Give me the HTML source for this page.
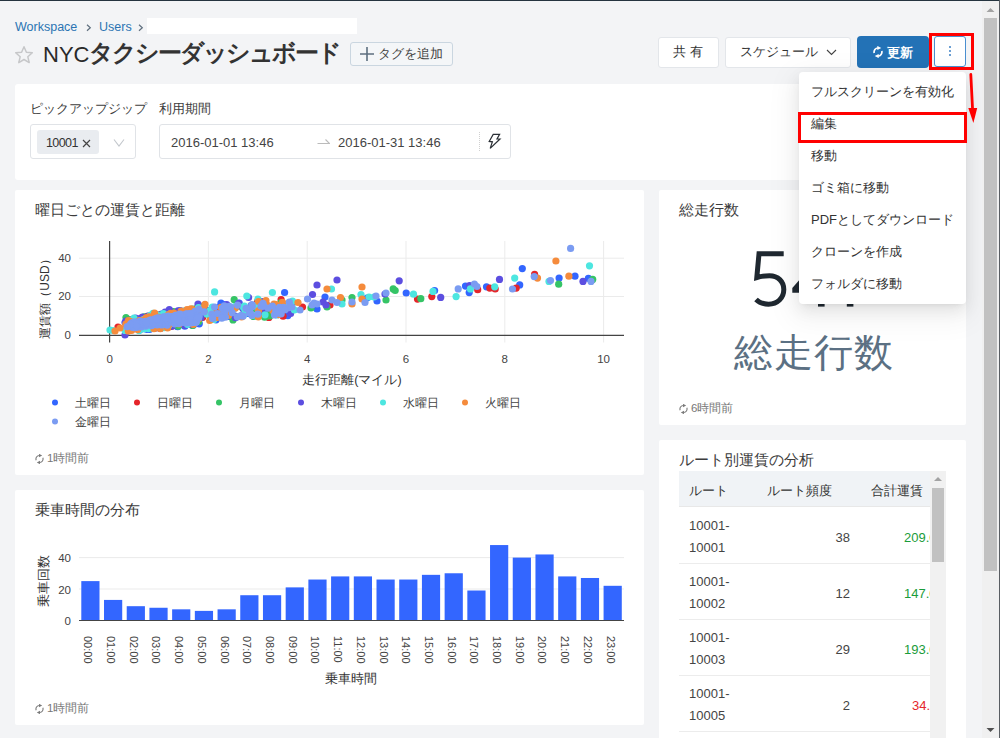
<!DOCTYPE html>
<html lang="ja">
<head>
<meta charset="utf-8">
<style>
*{box-sizing:border-box}
html,body{margin:0;padding:0}
body{width:1000px;height:738px;overflow:hidden;position:relative;background:#f3f4f6;font-family:"Liberation Sans",sans-serif;color:#333}
.abs{position:absolute}
.card{position:absolute;background:#fff;border-radius:2px}
.t{position:absolute;white-space:nowrap;line-height:1}
.btn{position:absolute;background:#fff;border:1px solid #e3e6ea;border-radius:3px}
svg text{font-family:"Liberation Sans",sans-serif}
</style>
</head>
<body>
<!-- top dark line -->
<div class="abs" style="left:0;top:0;width:1000px;height:1px;background:#25343f"></div>
<!-- breadcrumb -->
<div class="t" style="left:15px;top:21px;font-size:12.5px;color:#2b74b3">Workspace</div>
<svg class="abs" style="left:86px;top:23.5px" width="6" height="8"><path d="M1 0.8L4.3 3.8L1 6.8" fill="none" stroke="#5f6f7e" stroke-width="1.2"/></svg>
<div class="t" style="left:99px;top:21px;font-size:12.5px;color:#2b74b3">Users</div>
<svg class="abs" style="left:138px;top:23.5px" width="6" height="8"><path d="M1 0.8L4.3 3.8L1 6.8" fill="none" stroke="#5f6f7e" stroke-width="1.2"/></svg>
<div class="abs" style="left:147px;top:18px;width:210px;height:16px;background:#fff"></div>
<!-- star -->
<svg class="abs" style="left:14px;top:45px" width="20" height="20" viewBox="0 0 20 20"><path d="M10 1.8 L12.4 7.3 L18.3 7.8 L13.8 11.7 L15.2 17.6 L10 14.5 L4.8 17.6 L6.2 11.7 L1.7 7.8 L7.6 7.3 Z" fill="none" stroke="#c6c7c9" stroke-width="1.5" stroke-linejoin="round"/></svg>
<!-- title -->
<div class="t" style="left:43px;top:42px;font-size:22px;color:#2a2a2a">NYC<span style="font-size:24px;font-weight:bold;letter-spacing:-2px;position:relative;top:-1px;color:#333">タクシーダッシュボード</span></div>
<!-- tag button -->
<div class="btn" style="left:350px;top:42px;width:103px;height:24px;background:#f4f6f8;border-color:#cad6e0"></div>
<svg class="abs" style="left:360px;top:47px" width="14" height="14"><path d="M7 0V14M0 7H14" stroke="#5d6f7f" stroke-width="1.6"/></svg>
<div class="t" style="left:378px;top:47px;font-size:13px;color:#444">タグを追加</div>

<!-- header buttons -->
<div class="btn" style="left:658px;top:37px;width:61px;height:31px"></div>
<div class="t" style="left:673px;top:45px;font-size:13px;color:#333">共 有</div>
<div class="btn" style="left:725px;top:37px;width:126px;height:31px"></div>
<div class="t" style="left:740px;top:45px;font-size:13px;color:#333">スケジュール</div>
<svg class="abs" style="left:826px;top:49px" width="11" height="7"><path d="M1 1L5.5 5.5L10 1" fill="none" stroke="#444" stroke-width="1.1"/></svg>
<div class="abs" style="left:857px;top:36px;width:72px;height:32px;background:#2372b6;border-radius:4px"></div>
<svg class="abs" style="left:873px;top:46px" width="10" height="12" viewBox="0 0 10 12"><path d="M1.2 7A4 4 0 0 1 5 2M8.8 5A4 4 0 0 1 5 10" fill="none" stroke="#fff" stroke-width="1.7"/><path d="M4.3 -0.1L8.3 2L4.3 4.1Z M5.7 7.9L1.7 10L5.7 12.1Z" fill="#fff"/></svg>
<div class="t" style="left:887px;top:46px;font-size:13px;color:#fff;font-weight:bold">更新</div>
<div class="abs" style="left:934px;top:36px;width:32px;height:31px;background:#fff;border:1px solid #4a8fd0;border-radius:3px"></div>
<div class="abs" style="left:949px;top:46px;width:2px;height:2px;background:#3b7fc4;border-radius:1px"></div>
<div class="abs" style="left:949px;top:50px;width:2px;height:2px;background:#3b7fc4;border-radius:1px"></div>
<div class="abs" style="left:949px;top:54px;width:2px;height:2px;background:#3b7fc4;border-radius:1px"></div>

<!-- filter panel -->
<div class="card" style="left:15px;top:84px;width:951px;height:96px;border-radius:3px"></div>
<div class="t" style="left:30px;top:102px;font-size:13px;color:#3d3d3d">ピックアップジップ</div>
<div class="t" style="left:159px;top:102px;font-size:13px;color:#3d3d3d">利用期間</div>
<div class="abs" style="left:30px;top:124px;width:106px;height:35px;border:1px solid #e0e3e7;border-radius:3px;background:#fff"></div>
<div class="abs" style="left:37px;top:130px;width:62px;height:24px;background:#e9ecf0;border-radius:3px"></div>
<div class="t" style="left:46px;top:137px;font-size:12.5px;color:#333;letter-spacing:-0.6px">10001</div>
<svg class="abs" style="left:82px;top:139px" width="9" height="9"><path d="M1 1L8 8M8 1L1 8" stroke="#444" stroke-width="1.2"/></svg>
<svg class="abs" style="left:113px;top:138px" width="12" height="10"><path d="M1 1.5L6 8L11 1.5" fill="none" stroke="#c3c7cc" stroke-width="1.1"/></svg>
<div class="abs" style="left:159px;top:124px;width:352px;height:35px;border:1px solid #e0e3e7;border-radius:3px;background:#fff"></div>
<div class="t" style="left:171px;top:136px;font-size:13px;color:#444">2016-01-01 13:46</div>
<svg class="abs" style="left:317px;top:138px" width="13" height="7"><path d="M0.5 5.5H12.5L8.5 1.5" fill="none" stroke="#bbb" stroke-width="1.1"/></svg>
<div class="t" style="left:338px;top:136px;font-size:13px;color:#444">2016-01-31 13:46</div>
<div class="abs" style="left:479px;top:132px;width:0;height:19px;border-left:1px dotted #d0d0d0"></div>
<svg class="abs" style="left:486px;top:132px" width="16" height="18" viewBox="0 0 16 18"><path d="M7.2 2.4L13.6 2.4L11 7L14 7L4.2 16.4L6.4 9.8L3.2 9.4Z" fill="none" stroke="#2a2f35" stroke-width="1.2" stroke-linejoin="miter"/></svg>

<!-- scatter card -->
<div class="card" style="left:15px;top:190px;width:629px;height:285px"></div>
<div class="t" style="left:35px;top:202px;font-size:15px;color:#3c3c3c">曜日ごとの運賃と距離</div>
<svg class="abs" style="left:0;top:0" width="660" height="480">
 <g stroke="#ebebeb" stroke-width="1">
  <line x1="79" y1="258.2" x2="624" y2="258.2"/>
  <line x1="79" y1="296.5" x2="624" y2="296.5"/>
  <line x1="208.4" y1="241" x2="208.4" y2="342.5"/>
  <line x1="307.2" y1="241" x2="307.2" y2="342.5"/>
  <line x1="406" y1="241" x2="406" y2="342.5"/>
  <line x1="504.8" y1="241" x2="504.8" y2="342.5"/>
  <line x1="603.6" y1="241" x2="603.6" y2="342.5"/>
 </g>
 <line x1="109.6" y1="241" x2="109.6" y2="342.5" stroke="#444" stroke-width="1.2"/>
 <line x1="79" y1="335.4" x2="624" y2="335.4" stroke="#444" stroke-width="1.2"/>
 <g font-size="11.5" fill="#444" text-anchor="end">
  <text x="71" y="262">40</text><text x="71" y="300">20</text><text x="71" y="339">0</text>
 </g>
 <g font-size="11.5" fill="#444" text-anchor="middle">
  <text x="109.6" y="363">0</text><text x="208.4" y="363">2</text><text x="307.2" y="363">4</text><text x="406" y="363">6</text><text x="504.8" y="363">8</text><text x="603.6" y="363">10</text>
 </g>
 <text transform="translate(48.5,296) rotate(-90)" font-size="12" fill="#333" text-anchor="middle">運賃額（USD）</text>
 <text x="352" y="384" font-size="12.5" fill="#333" text-anchor="middle">走行距離(マイル)</text>
 <g fill="#3366ff"><circle cx="142.5" cy="320.9" r="3.6"/><circle cx="155.5" cy="322.7" r="3.6"/><circle cx="125.0" cy="322.5" r="3.6"/><circle cx="183.4" cy="314.3" r="3.6"/><circle cx="149.7" cy="319.8" r="3.6"/><circle cx="170.3" cy="318.7" r="3.6"/><circle cx="177.6" cy="326.5" r="3.6"/><circle cx="169.9" cy="313.3" r="3.6"/><circle cx="179.8" cy="315.7" r="3.6"/><circle cx="151.4" cy="325.1" r="3.6"/><circle cx="190.3" cy="315.8" r="3.6"/><circle cx="174.7" cy="317.4" r="3.6"/><circle cx="126.7" cy="331.3" r="3.6"/><circle cx="162.2" cy="326.1" r="3.6"/><circle cx="158.9" cy="315.2" r="3.6"/><circle cx="135.2" cy="324.1" r="3.6"/><circle cx="184.8" cy="326.2" r="3.6"/><circle cx="173.0" cy="317.5" r="3.6"/><circle cx="149.5" cy="329.5" r="3.6"/><circle cx="144.6" cy="326.3" r="3.6"/><circle cx="161.6" cy="314.0" r="3.6"/><circle cx="155.8" cy="316.3" r="3.6"/><circle cx="170.4" cy="312.5" r="3.6"/><circle cx="177.7" cy="326.7" r="3.6"/><circle cx="155.2" cy="324.6" r="3.6"/><circle cx="193.4" cy="325.1" r="3.6"/><circle cx="185.2" cy="317.6" r="3.6"/><circle cx="199.3" cy="323.8" r="3.6"/><circle cx="157.3" cy="323.2" r="3.6"/><circle cx="137.4" cy="324.5" r="3.6"/><circle cx="155.4" cy="325.1" r="3.6"/><circle cx="184.8" cy="314.6" r="3.6"/><circle cx="169.8" cy="324.1" r="3.6"/><circle cx="156.3" cy="316.2" r="3.6"/><circle cx="180.1" cy="314.3" r="3.6"/><circle cx="193.7" cy="323.5" r="3.6"/><circle cx="156.9" cy="323.5" r="3.6"/><circle cx="141.7" cy="320.8" r="3.6"/><circle cx="180.9" cy="324.1" r="3.6"/><circle cx="147.4" cy="326.8" r="3.6"/><circle cx="191.1" cy="313.3" r="3.6"/><circle cx="166.0" cy="324.9" r="3.6"/><circle cx="150.1" cy="319.5" r="3.6"/><circle cx="146.9" cy="329.5" r="3.6"/><circle cx="193.4" cy="321.3" r="3.6"/><circle cx="168.8" cy="326.5" r="3.6"/><circle cx="184.6" cy="322.6" r="3.6"/><circle cx="174.3" cy="315.2" r="3.6"/><circle cx="179.9" cy="310.7" r="3.6"/><circle cx="215.4" cy="316.8" r="3.6"/><circle cx="216.1" cy="319.8" r="3.6"/><circle cx="198.3" cy="321.1" r="3.6"/><circle cx="229.1" cy="311.2" r="3.6"/><circle cx="223.3" cy="306.4" r="3.6"/><circle cx="265.8" cy="312.5" r="3.6"/><circle cx="212.0" cy="311.8" r="3.6"/><circle cx="239.2" cy="303.0" r="3.6"/><circle cx="201.8" cy="311.5" r="3.6"/><circle cx="229.5" cy="316.4" r="3.6"/><circle cx="264.0" cy="304.3" r="3.6"/><circle cx="287.9" cy="315.6" r="3.6"/><circle cx="223.6" cy="304.5" r="3.6"/><circle cx="247.7" cy="313.4" r="3.6"/><circle cx="220.4" cy="306.2" r="3.6"/><circle cx="284.6" cy="292.5" r="3.6"/><circle cx="221.0" cy="303.0" r="3.6"/><circle cx="317.0" cy="309.0" r="3.6"/><circle cx="325.0" cy="297.0" r="3.6"/><circle cx="367.0" cy="298.0" r="3.6"/><circle cx="377.0" cy="301.0" r="3.6"/><circle cx="522.3" cy="268.6" r="3.6"/><circle cx="559.1" cy="278.1" r="3.6"/><circle cx="575.0" cy="276.2" r="3.6"/><circle cx="588.4" cy="278.3" r="3.6"/><circle cx="519.7" cy="284.9" r="3.6"/><circle cx="486.5" cy="286.8" r="3.6"/><circle cx="406.2" cy="293.0" r="3.6"/><circle cx="434.6" cy="290.5" r="3.6"/><circle cx="465.5" cy="286.1" r="3.6"/><circle cx="469.2" cy="292.6" r="3.6"/></g><g fill="#e5252a"><circle cx="158.9" cy="326.7" r="3.6"/><circle cx="129.7" cy="319.6" r="3.6"/><circle cx="178.1" cy="315.9" r="3.6"/><circle cx="156.5" cy="322.7" r="3.6"/><circle cx="181.9" cy="312.0" r="3.6"/><circle cx="133.7" cy="323.8" r="3.6"/><circle cx="147.8" cy="328.3" r="3.6"/><circle cx="173.1" cy="313.2" r="3.6"/><circle cx="138.7" cy="319.6" r="3.6"/><circle cx="186.3" cy="313.5" r="3.6"/><circle cx="130.6" cy="321.7" r="3.6"/><circle cx="158.4" cy="315.0" r="3.6"/><circle cx="146.1" cy="323.6" r="3.6"/><circle cx="194.8" cy="316.6" r="3.6"/><circle cx="149.5" cy="325.0" r="3.6"/><circle cx="172.6" cy="324.5" r="3.6"/><circle cx="194.1" cy="311.6" r="3.6"/><circle cx="182.7" cy="314.4" r="3.6"/><circle cx="165.1" cy="313.5" r="3.6"/><circle cx="196.0" cy="316.5" r="3.6"/><circle cx="154.5" cy="326.3" r="3.6"/><circle cx="154.1" cy="321.4" r="3.6"/><circle cx="194.3" cy="310.1" r="3.6"/><circle cx="150.1" cy="326.7" r="3.6"/><circle cx="164.3" cy="321.8" r="3.6"/><circle cx="134.1" cy="319.6" r="3.6"/><circle cx="145.2" cy="322.9" r="3.6"/><circle cx="171.3" cy="326.5" r="3.6"/><circle cx="146.3" cy="326.2" r="3.6"/><circle cx="156.0" cy="322.3" r="3.6"/><circle cx="170.9" cy="325.5" r="3.6"/><circle cx="191.8" cy="311.7" r="3.6"/><circle cx="191.6" cy="310.7" r="3.6"/><circle cx="165.7" cy="323.7" r="3.6"/><circle cx="162.7" cy="323.7" r="3.6"/><circle cx="192.9" cy="316.6" r="3.6"/><circle cx="138.8" cy="320.3" r="3.6"/><circle cx="172.6" cy="312.3" r="3.6"/><circle cx="177.1" cy="323.4" r="3.6"/><circle cx="141.2" cy="322.6" r="3.6"/><circle cx="155.1" cy="315.5" r="3.6"/><circle cx="147.2" cy="316.3" r="3.6"/><circle cx="195.8" cy="308.9" r="3.6"/><circle cx="157.2" cy="321.4" r="3.6"/><circle cx="193.2" cy="310.6" r="3.6"/><circle cx="169.4" cy="322.1" r="3.6"/><circle cx="193.5" cy="310.9" r="3.6"/><circle cx="156.8" cy="318.2" r="3.6"/><circle cx="182.3" cy="315.4" r="3.6"/><circle cx="154.7" cy="320.4" r="3.6"/><circle cx="141.6" cy="317.9" r="3.6"/><circle cx="193.7" cy="312.3" r="3.6"/><circle cx="199.3" cy="313.8" r="3.6"/><circle cx="173.6" cy="323.9" r="3.6"/><circle cx="138.9" cy="321.3" r="3.6"/><circle cx="182.9" cy="311.4" r="3.6"/><circle cx="155.0" cy="317.9" r="3.6"/><circle cx="255.6" cy="314.5" r="3.6"/><circle cx="281.1" cy="299.7" r="3.6"/><circle cx="217.8" cy="310.1" r="3.6"/><circle cx="272.3" cy="312.4" r="3.6"/><circle cx="252.1" cy="307.2" r="3.6"/><circle cx="262.5" cy="304.5" r="3.6"/><circle cx="257.4" cy="301.7" r="3.6"/><circle cx="221.2" cy="311.9" r="3.6"/><circle cx="283.1" cy="316.2" r="3.6"/><circle cx="202.7" cy="317.3" r="3.6"/><circle cx="268.9" cy="317.4" r="3.6"/><circle cx="118.0" cy="327.0" r="3.6"/><circle cx="302.5" cy="307.0" r="3.6"/><circle cx="330.0" cy="305.0" r="3.6"/><circle cx="534.6" cy="274.4" r="3.6"/><circle cx="516.2" cy="288.1" r="3.6"/><circle cx="489.8" cy="288.1" r="3.6"/><circle cx="495.2" cy="289.0" r="3.6"/><circle cx="417.5" cy="299.1" r="3.6"/><circle cx="431.8" cy="296.6" r="3.6"/><circle cx="477.7" cy="289.7" r="3.6"/></g><g fill="#35c466"><circle cx="170.0" cy="324.3" r="3.6"/><circle cx="174.7" cy="318.7" r="3.6"/><circle cx="182.5" cy="316.6" r="3.6"/><circle cx="143.2" cy="324.9" r="3.6"/><circle cx="133.2" cy="325.1" r="3.6"/><circle cx="142.9" cy="326.4" r="3.6"/><circle cx="127.6" cy="319.8" r="3.6"/><circle cx="177.8" cy="323.7" r="3.6"/><circle cx="144.2" cy="316.8" r="3.6"/><circle cx="178.3" cy="326.2" r="3.6"/><circle cx="178.1" cy="320.0" r="3.6"/><circle cx="192.5" cy="325.4" r="3.6"/><circle cx="165.3" cy="325.1" r="3.6"/><circle cx="150.7" cy="321.5" r="3.6"/><circle cx="193.6" cy="319.1" r="3.6"/><circle cx="192.7" cy="313.7" r="3.6"/><circle cx="132.2" cy="325.9" r="3.6"/><circle cx="177.9" cy="321.1" r="3.6"/><circle cx="159.7" cy="325.3" r="3.6"/><circle cx="154.3" cy="321.0" r="3.6"/><circle cx="198.7" cy="321.6" r="3.6"/><circle cx="192.7" cy="309.0" r="3.6"/><circle cx="195.9" cy="319.5" r="3.6"/><circle cx="173.6" cy="311.7" r="3.6"/><circle cx="181.6" cy="316.6" r="3.6"/><circle cx="151.8" cy="317.5" r="3.6"/><circle cx="186.1" cy="311.6" r="3.6"/><circle cx="171.9" cy="317.5" r="3.6"/><circle cx="172.1" cy="311.9" r="3.6"/><circle cx="152.7" cy="316.5" r="3.6"/><circle cx="141.4" cy="325.9" r="3.6"/><circle cx="193.5" cy="315.7" r="3.6"/><circle cx="192.1" cy="312.6" r="3.6"/><circle cx="154.6" cy="319.7" r="3.6"/><circle cx="160.4" cy="324.7" r="3.6"/><circle cx="148.4" cy="318.6" r="3.6"/><circle cx="248.1" cy="310.2" r="3.6"/><circle cx="253.5" cy="316.4" r="3.6"/><circle cx="272.2" cy="308.4" r="3.6"/><circle cx="210.5" cy="317.6" r="3.6"/><circle cx="198.3" cy="311.9" r="3.6"/><circle cx="269.5" cy="309.8" r="3.6"/><circle cx="238.6" cy="306.2" r="3.6"/><circle cx="224.1" cy="309.2" r="3.6"/><circle cx="268.6" cy="313.6" r="3.6"/><circle cx="202.0" cy="306.7" r="3.6"/><circle cx="249.9" cy="309.1" r="3.6"/><circle cx="270.0" cy="315.8" r="3.6"/><circle cx="291.7" cy="305.1" r="3.6"/><circle cx="233.0" cy="319.9" r="3.6"/><circle cx="264.6" cy="317.2" r="3.6"/><circle cx="266.5" cy="316.2" r="3.6"/><circle cx="281.0" cy="302.7" r="3.6"/><circle cx="253.0" cy="308.4" r="3.6"/><circle cx="258.4" cy="315.3" r="3.6"/><circle cx="243.8" cy="313.9" r="3.6"/><circle cx="259.3" cy="307.5" r="3.6"/><circle cx="126.0" cy="317.5" r="3.6"/><circle cx="234.2" cy="299.7" r="3.6"/><circle cx="311.0" cy="308.0" r="3.6"/><circle cx="327.0" cy="307.0" r="3.6"/><circle cx="342.0" cy="300.0" r="3.6"/><circle cx="352.0" cy="297.5" r="3.6"/><circle cx="386.0" cy="300.0" r="3.6"/><circle cx="558.7" cy="284.2" r="3.6"/><circle cx="592.7" cy="279.4" r="3.6"/><circle cx="393.2" cy="288.9" r="3.6"/><circle cx="395.2" cy="290.5" r="3.6"/><circle cx="420.8" cy="298.7" r="3.6"/></g><g fill="#5c4ee0"><circle cx="158.9" cy="322.3" r="3.6"/><circle cx="171.0" cy="314.9" r="3.6"/><circle cx="172.6" cy="321.1" r="3.6"/><circle cx="160.2" cy="328.4" r="3.6"/><circle cx="148.3" cy="316.1" r="3.6"/><circle cx="178.0" cy="310.9" r="3.6"/><circle cx="182.7" cy="316.9" r="3.6"/><circle cx="161.3" cy="322.3" r="3.6"/><circle cx="139.7" cy="330.0" r="3.6"/><circle cx="156.6" cy="327.7" r="3.6"/><circle cx="198.3" cy="309.5" r="3.6"/><circle cx="181.2" cy="311.3" r="3.6"/><circle cx="131.9" cy="320.5" r="3.6"/><circle cx="133.7" cy="321.8" r="3.6"/><circle cx="177.1" cy="318.3" r="3.6"/><circle cx="127.2" cy="326.9" r="3.6"/><circle cx="162.3" cy="322.7" r="3.6"/><circle cx="186.6" cy="311.1" r="3.6"/><circle cx="145.6" cy="319.3" r="3.6"/><circle cx="176.3" cy="314.2" r="3.6"/><circle cx="144.2" cy="326.3" r="3.6"/><circle cx="171.9" cy="326.2" r="3.6"/><circle cx="184.8" cy="325.5" r="3.6"/><circle cx="151.1" cy="316.6" r="3.6"/><circle cx="163.9" cy="323.5" r="3.6"/><circle cx="129.9" cy="325.8" r="3.6"/><circle cx="194.1" cy="322.1" r="3.6"/><circle cx="150.5" cy="328.2" r="3.6"/><circle cx="164.4" cy="314.8" r="3.6"/><circle cx="134.9" cy="319.4" r="3.6"/><circle cx="132.3" cy="329.2" r="3.6"/><circle cx="190.7" cy="324.3" r="3.6"/><circle cx="183.3" cy="323.5" r="3.6"/><circle cx="165.0" cy="319.0" r="3.6"/><circle cx="173.2" cy="322.8" r="3.6"/><circle cx="133.1" cy="321.6" r="3.6"/><circle cx="154.0" cy="328.4" r="3.6"/><circle cx="160.4" cy="316.3" r="3.6"/><circle cx="165.6" cy="322.0" r="3.6"/><circle cx="168.9" cy="322.2" r="3.6"/><circle cx="158.2" cy="324.0" r="3.6"/><circle cx="172.3" cy="317.6" r="3.6"/><circle cx="151.6" cy="320.1" r="3.6"/><circle cx="187.8" cy="322.2" r="3.6"/><circle cx="167.6" cy="325.2" r="3.6"/><circle cx="180.4" cy="316.4" r="3.6"/><circle cx="138.3" cy="318.8" r="3.6"/><circle cx="156.7" cy="324.9" r="3.6"/><circle cx="182.4" cy="318.7" r="3.6"/><circle cx="151.2" cy="315.5" r="3.6"/><circle cx="125.8" cy="321.2" r="3.6"/><circle cx="160.4" cy="321.4" r="3.6"/><circle cx="166.1" cy="325.4" r="3.6"/><circle cx="189.0" cy="317.2" r="3.6"/><circle cx="142.5" cy="317.0" r="3.6"/><circle cx="165.1" cy="312.2" r="3.6"/><circle cx="169.3" cy="309.6" r="3.6"/><circle cx="135.5" cy="318.0" r="3.6"/><circle cx="151.3" cy="316.0" r="3.6"/><circle cx="225.7" cy="316.4" r="3.6"/><circle cx="251.1" cy="305.5" r="3.6"/><circle cx="286.0" cy="308.7" r="3.6"/><circle cx="263.9" cy="312.9" r="3.6"/><circle cx="226.7" cy="304.6" r="3.6"/><circle cx="238.6" cy="303.3" r="3.6"/><circle cx="233.3" cy="308.2" r="3.6"/><circle cx="242.9" cy="308.6" r="3.6"/><circle cx="235.0" cy="316.2" r="3.6"/><circle cx="247.7" cy="311.4" r="3.6"/><circle cx="235.5" cy="317.7" r="3.6"/><circle cx="208.0" cy="310.5" r="3.6"/><circle cx="262.1" cy="301.5" r="3.6"/><circle cx="290.6" cy="313.5" r="3.6"/><circle cx="201.0" cy="317.4" r="3.6"/><circle cx="125.0" cy="335.0" r="3.6"/><circle cx="248.6" cy="297.5" r="3.6"/><circle cx="198.0" cy="304.0" r="3.6"/><circle cx="317.0" cy="285.0" r="3.6"/><circle cx="337.0" cy="280.0" r="3.6"/><circle cx="312.5" cy="294.5" r="3.6"/><circle cx="323.0" cy="302.0" r="3.6"/><circle cx="326.0" cy="305.0" r="3.6"/><circle cx="385.0" cy="294.0" r="3.6"/><circle cx="499.5" cy="279.4" r="3.6"/><circle cx="583.0" cy="281.4" r="3.6"/><circle cx="399.2" cy="280.8" r="3.6"/><circle cx="440.7" cy="297.4" r="3.6"/><circle cx="469.6" cy="285.7" r="3.6"/></g><g fill="#4de6e0"><circle cx="197.4" cy="319.1" r="3.6"/><circle cx="173.8" cy="321.4" r="3.6"/><circle cx="158.0" cy="326.6" r="3.6"/><circle cx="163.5" cy="313.7" r="3.6"/><circle cx="184.8" cy="312.5" r="3.6"/><circle cx="125.0" cy="330.4" r="3.6"/><circle cx="139.0" cy="330.6" r="3.6"/><circle cx="141.0" cy="320.6" r="3.6"/><circle cx="171.7" cy="313.8" r="3.6"/><circle cx="136.9" cy="326.1" r="3.6"/><circle cx="167.0" cy="325.8" r="3.6"/><circle cx="164.1" cy="327.6" r="3.6"/><circle cx="189.8" cy="318.6" r="3.6"/><circle cx="187.9" cy="310.4" r="3.6"/><circle cx="135.7" cy="326.0" r="3.6"/><circle cx="191.0" cy="315.1" r="3.6"/><circle cx="148.7" cy="327.6" r="3.6"/><circle cx="166.3" cy="322.8" r="3.6"/><circle cx="157.2" cy="314.9" r="3.6"/><circle cx="131.5" cy="321.6" r="3.6"/><circle cx="166.9" cy="325.5" r="3.6"/><circle cx="172.9" cy="319.9" r="3.6"/><circle cx="144.2" cy="325.7" r="3.6"/><circle cx="140.6" cy="328.6" r="3.6"/><circle cx="163.7" cy="319.3" r="3.6"/><circle cx="168.7" cy="325.6" r="3.6"/><circle cx="143.8" cy="319.4" r="3.6"/><circle cx="165.4" cy="326.2" r="3.6"/><circle cx="172.9" cy="320.1" r="3.6"/><circle cx="127.8" cy="326.3" r="3.6"/><circle cx="152.8" cy="328.3" r="3.6"/><circle cx="167.7" cy="315.5" r="3.6"/><circle cx="135.0" cy="322.5" r="3.6"/><circle cx="198.5" cy="307.5" r="3.6"/><circle cx="143.8" cy="329.0" r="3.6"/><circle cx="165.5" cy="319.3" r="3.6"/><circle cx="158.3" cy="323.7" r="3.6"/><circle cx="195.9" cy="315.1" r="3.6"/><circle cx="154.9" cy="319.3" r="3.6"/><circle cx="146.4" cy="325.3" r="3.6"/><circle cx="170.3" cy="313.9" r="3.6"/><circle cx="156.5" cy="325.8" r="3.6"/><circle cx="162.7" cy="318.1" r="3.6"/><circle cx="185.2" cy="317.0" r="3.6"/><circle cx="152.7" cy="324.5" r="3.6"/><circle cx="130.9" cy="320.0" r="3.6"/><circle cx="148.3" cy="328.6" r="3.6"/><circle cx="165.5" cy="325.7" r="3.6"/><circle cx="188.1" cy="316.2" r="3.6"/><circle cx="175.4" cy="319.1" r="3.6"/><circle cx="185.4" cy="310.7" r="3.6"/><circle cx="187.5" cy="324.3" r="3.6"/><circle cx="149.1" cy="321.2" r="3.6"/><circle cx="193.6" cy="314.0" r="3.6"/><circle cx="185.1" cy="316.0" r="3.6"/><circle cx="150.3" cy="315.4" r="3.6"/><circle cx="152.8" cy="314.0" r="3.6"/><circle cx="153.0" cy="313.4" r="3.6"/><circle cx="257.0" cy="304.8" r="3.6"/><circle cx="223.2" cy="312.7" r="3.6"/><circle cx="229.5" cy="313.4" r="3.6"/><circle cx="276.2" cy="308.2" r="3.6"/><circle cx="202.1" cy="309.8" r="3.6"/><circle cx="234.7" cy="306.5" r="3.6"/><circle cx="265.0" cy="314.8" r="3.6"/><circle cx="206.9" cy="314.1" r="3.6"/><circle cx="244.6" cy="308.6" r="3.6"/><circle cx="271.7" cy="308.0" r="3.6"/><circle cx="294.4" cy="310.0" r="3.6"/><circle cx="202.6" cy="309.1" r="3.6"/><circle cx="258.2" cy="309.8" r="3.6"/><circle cx="227.3" cy="313.6" r="3.6"/><circle cx="244.4" cy="313.9" r="3.6"/><circle cx="212.3" cy="307.1" r="3.6"/><circle cx="211.6" cy="319.2" r="3.6"/><circle cx="252.9" cy="315.3" r="3.6"/><circle cx="209.6" cy="312.7" r="3.6"/><circle cx="235.2" cy="307.9" r="3.6"/><circle cx="244.4" cy="306.0" r="3.6"/><circle cx="224.4" cy="309.5" r="3.6"/><circle cx="243.5" cy="307.3" r="3.6"/><circle cx="284.5" cy="308.7" r="3.6"/><circle cx="277.1" cy="314.9" r="3.6"/><circle cx="264.3" cy="305.0" r="3.6"/><circle cx="256.7" cy="305.4" r="3.6"/><circle cx="213.5" cy="314.8" r="3.6"/><circle cx="225.7" cy="316.3" r="3.6"/><circle cx="283.9" cy="304.3" r="3.6"/><circle cx="213.8" cy="319.4" r="3.6"/><circle cx="210.1" cy="310.5" r="3.6"/><circle cx="224.0" cy="307.6" r="3.6"/><circle cx="110.0" cy="330.0" r="3.6"/><circle cx="113.0" cy="330.5" r="3.6"/><circle cx="134.0" cy="318.0" r="3.6"/><circle cx="214.6" cy="291.9" r="3.6"/><circle cx="246.8" cy="296.0" r="3.6"/><circle cx="257.9" cy="299.2" r="3.6"/><circle cx="272.4" cy="292.5" r="3.6"/><circle cx="331.5" cy="289.0" r="3.6"/><circle cx="292.5" cy="301.0" r="3.6"/><circle cx="342.0" cy="304.0" r="3.6"/><circle cx="361.0" cy="294.5" r="3.6"/><circle cx="369.0" cy="297.0" r="3.6"/><circle cx="374.0" cy="297.0" r="3.6"/><circle cx="589.5" cy="265.8" r="3.6"/><circle cx="514.7" cy="278.1" r="3.6"/><circle cx="549.0" cy="281.4" r="3.6"/><circle cx="494.7" cy="286.8" r="3.6"/><circle cx="413.5" cy="294.2" r="3.6"/><circle cx="433.0" cy="291.4" r="3.6"/><circle cx="456.1" cy="296.6" r="3.6"/><circle cx="470.4" cy="288.9" r="3.6"/></g><g fill="#f58b3c"><circle cx="138.8" cy="324.3" r="3.6"/><circle cx="147.8" cy="317.3" r="3.6"/><circle cx="154.0" cy="328.7" r="3.6"/><circle cx="139.1" cy="324.2" r="3.6"/><circle cx="130.6" cy="321.6" r="3.6"/><circle cx="147.0" cy="318.6" r="3.6"/><circle cx="198.5" cy="319.0" r="3.6"/><circle cx="130.6" cy="325.8" r="3.6"/><circle cx="128.3" cy="330.9" r="3.6"/><circle cx="170.7" cy="313.3" r="3.6"/><circle cx="179.6" cy="316.8" r="3.6"/><circle cx="137.7" cy="329.6" r="3.6"/><circle cx="153.7" cy="322.4" r="3.6"/><circle cx="145.9" cy="324.7" r="3.6"/><circle cx="173.7" cy="320.5" r="3.6"/><circle cx="158.5" cy="323.4" r="3.6"/><circle cx="145.4" cy="321.2" r="3.6"/><circle cx="131.5" cy="330.5" r="3.6"/><circle cx="179.1" cy="324.0" r="3.6"/><circle cx="160.3" cy="328.7" r="3.6"/><circle cx="195.9" cy="316.4" r="3.6"/><circle cx="139.6" cy="320.5" r="3.6"/><circle cx="171.5" cy="313.5" r="3.6"/><circle cx="190.9" cy="308.9" r="3.6"/><circle cx="168.5" cy="314.5" r="3.6"/><circle cx="138.6" cy="323.6" r="3.6"/><circle cx="149.3" cy="316.9" r="3.6"/><circle cx="146.0" cy="317.9" r="3.6"/><circle cx="125.8" cy="324.2" r="3.6"/><circle cx="167.6" cy="328.0" r="3.6"/><circle cx="194.7" cy="319.6" r="3.6"/><circle cx="181.1" cy="311.0" r="3.6"/><circle cx="128.4" cy="320.6" r="3.6"/><circle cx="170.1" cy="322.2" r="3.6"/><circle cx="170.7" cy="323.4" r="3.6"/><circle cx="139.2" cy="320.8" r="3.6"/><circle cx="149.4" cy="323.4" r="3.6"/><circle cx="187.0" cy="312.3" r="3.6"/><circle cx="131.1" cy="322.7" r="3.6"/><circle cx="152.5" cy="316.9" r="3.6"/><circle cx="158.1" cy="323.0" r="3.6"/><circle cx="159.4" cy="317.3" r="3.6"/><circle cx="187.1" cy="309.5" r="3.6"/><circle cx="167.6" cy="327.5" r="3.6"/><circle cx="192.4" cy="309.7" r="3.6"/><circle cx="174.0" cy="313.0" r="3.6"/><circle cx="193.6" cy="315.2" r="3.6"/><circle cx="173.0" cy="319.9" r="3.6"/><circle cx="141.3" cy="320.3" r="3.6"/><circle cx="193.3" cy="324.5" r="3.6"/><circle cx="154.6" cy="313.2" r="3.6"/><circle cx="258.3" cy="316.8" r="3.6"/><circle cx="215.4" cy="313.5" r="3.6"/><circle cx="258.5" cy="301.5" r="3.6"/><circle cx="203.9" cy="311.5" r="3.6"/><circle cx="200.0" cy="310.1" r="3.6"/><circle cx="241.6" cy="317.0" r="3.6"/><circle cx="201.1" cy="309.9" r="3.6"/><circle cx="228.4" cy="310.6" r="3.6"/><circle cx="274.0" cy="304.1" r="3.6"/><circle cx="266.2" cy="303.9" r="3.6"/><circle cx="217.6" cy="317.3" r="3.6"/><circle cx="265.9" cy="300.5" r="3.6"/><circle cx="209.7" cy="320.5" r="3.6"/><circle cx="205.0" cy="304.4" r="3.6"/><circle cx="235.3" cy="308.1" r="3.6"/><circle cx="272.8" cy="310.6" r="3.6"/><circle cx="278.5" cy="314.6" r="3.6"/><circle cx="258.6" cy="310.5" r="3.6"/><circle cx="228.4" cy="315.5" r="3.6"/><circle cx="276.1" cy="304.6" r="3.6"/><circle cx="221.0" cy="307.4" r="3.6"/><circle cx="203.2" cy="308.6" r="3.6"/><circle cx="222.5" cy="314.4" r="3.6"/><circle cx="267.4" cy="305.7" r="3.6"/><circle cx="282.5" cy="302.4" r="3.6"/><circle cx="115.0" cy="331.0" r="3.6"/><circle cx="120.0" cy="328.0" r="3.6"/><circle cx="327.0" cy="289.0" r="3.6"/><circle cx="362.0" cy="287.0" r="3.6"/><circle cx="298.0" cy="302.5" r="3.6"/><circle cx="340.5" cy="297.5" r="3.6"/><circle cx="352.0" cy="304.0" r="3.6"/><circle cx="362.0" cy="299.0" r="3.6"/><circle cx="555.9" cy="261.0" r="3.6"/><circle cx="537.5" cy="278.1" r="3.6"/><circle cx="568.9" cy="276.2" r="3.6"/></g><g fill="#7b9cf2"><circle cx="190.7" cy="321.9" r="3.6"/><circle cx="159.3" cy="319.5" r="3.6"/><circle cx="157.2" cy="325.0" r="3.6"/><circle cx="156.8" cy="324.2" r="3.6"/><circle cx="136.7" cy="327.3" r="3.6"/><circle cx="185.9" cy="314.2" r="3.6"/><circle cx="180.9" cy="320.0" r="3.6"/><circle cx="164.2" cy="317.1" r="3.6"/><circle cx="168.3" cy="317.5" r="3.6"/><circle cx="141.1" cy="326.9" r="3.6"/><circle cx="137.0" cy="322.2" r="3.6"/><circle cx="152.0" cy="323.5" r="3.6"/><circle cx="165.1" cy="324.3" r="3.6"/><circle cx="177.3" cy="315.2" r="3.6"/><circle cx="181.4" cy="319.1" r="3.6"/><circle cx="163.4" cy="316.9" r="3.6"/><circle cx="139.9" cy="322.2" r="3.6"/><circle cx="176.5" cy="322.1" r="3.6"/><circle cx="158.6" cy="317.9" r="3.6"/><circle cx="156.6" cy="322.0" r="3.6"/><circle cx="196.0" cy="322.0" r="3.6"/><circle cx="149.4" cy="322.3" r="3.6"/><circle cx="167.2" cy="325.1" r="3.6"/><circle cx="175.4" cy="315.3" r="3.6"/><circle cx="131.5" cy="323.2" r="3.6"/><circle cx="175.4" cy="321.2" r="3.6"/><circle cx="181.3" cy="321.6" r="3.6"/><circle cx="135.0" cy="324.6" r="3.6"/><circle cx="189.9" cy="319.8" r="3.6"/><circle cx="161.2" cy="319.7" r="3.6"/><circle cx="134.4" cy="326.7" r="3.6"/><circle cx="189.3" cy="321.3" r="3.6"/><circle cx="179.2" cy="323.0" r="3.6"/><circle cx="137.3" cy="325.4" r="3.6"/><circle cx="195.4" cy="319.6" r="3.6"/><circle cx="196.6" cy="319.6" r="3.6"/><circle cx="167.1" cy="316.9" r="3.6"/><circle cx="140.0" cy="323.4" r="3.6"/><circle cx="134.1" cy="323.8" r="3.6"/><circle cx="146.3" cy="323.2" r="3.6"/><circle cx="173.4" cy="319.3" r="3.6"/><circle cx="154.3" cy="319.2" r="3.6"/><circle cx="172.0" cy="316.5" r="3.6"/><circle cx="172.6" cy="316.8" r="3.6"/><circle cx="140.3" cy="321.1" r="3.6"/><circle cx="160.3" cy="323.2" r="3.6"/><circle cx="133.4" cy="322.2" r="3.6"/><circle cx="199.1" cy="315.6" r="3.6"/><circle cx="183.1" cy="316.8" r="3.6"/><circle cx="186.9" cy="322.5" r="3.6"/><circle cx="136.3" cy="322.8" r="3.6"/><circle cx="137.0" cy="325.9" r="3.6"/><circle cx="161.7" cy="324.9" r="3.6"/><circle cx="172.1" cy="322.1" r="3.6"/><circle cx="171.4" cy="318.3" r="3.6"/><circle cx="184.4" cy="315.7" r="3.6"/><circle cx="198.9" cy="316.7" r="3.6"/><circle cx="145.3" cy="321.3" r="3.6"/><circle cx="148.7" cy="322.6" r="3.6"/><circle cx="167.2" cy="317.9" r="3.6"/><circle cx="150.6" cy="321.2" r="3.6"/><circle cx="133.6" cy="326.4" r="3.6"/><circle cx="144.8" cy="323.9" r="3.6"/><circle cx="148.1" cy="321.2" r="3.6"/><circle cx="171.3" cy="320.2" r="3.6"/><circle cx="168.5" cy="317.7" r="3.6"/><circle cx="195.1" cy="322.5" r="3.6"/><circle cx="178.3" cy="323.4" r="3.6"/><circle cx="168.0" cy="316.2" r="3.6"/><circle cx="174.8" cy="322.2" r="3.6"/><circle cx="136.1" cy="324.6" r="3.6"/><circle cx="156.9" cy="320.6" r="3.6"/><circle cx="132.8" cy="327.5" r="3.6"/><circle cx="145.7" cy="326.2" r="3.6"/><circle cx="159.5" cy="323.5" r="3.6"/><circle cx="143.7" cy="324.2" r="3.6"/><circle cx="166.4" cy="316.8" r="3.6"/><circle cx="193.7" cy="313.4" r="3.6"/><circle cx="181.2" cy="322.7" r="3.6"/><circle cx="150.8" cy="320.1" r="3.6"/><circle cx="195.1" cy="311.3" r="3.6"/><circle cx="176.7" cy="318.0" r="3.6"/><circle cx="182.1" cy="317.2" r="3.6"/><circle cx="138.3" cy="325.1" r="3.6"/><circle cx="186.0" cy="317.6" r="3.6"/><circle cx="155.9" cy="324.4" r="3.6"/><circle cx="194.8" cy="322.5" r="3.6"/><circle cx="136.2" cy="326.4" r="3.6"/><circle cx="188.7" cy="322.1" r="3.6"/><circle cx="171.5" cy="321.3" r="3.6"/><circle cx="182.5" cy="315.1" r="3.6"/><circle cx="156.5" cy="318.3" r="3.6"/><circle cx="165.1" cy="317.5" r="3.6"/><circle cx="156.0" cy="320.8" r="3.6"/><circle cx="135.7" cy="323.2" r="3.6"/><circle cx="194.9" cy="311.9" r="3.6"/><circle cx="184.0" cy="320.6" r="3.6"/><circle cx="184.3" cy="317.3" r="3.6"/><circle cx="162.8" cy="317.8" r="3.6"/><circle cx="151.6" cy="325.7" r="3.6"/><circle cx="193.6" cy="317.8" r="3.6"/><circle cx="156.1" cy="320.3" r="3.6"/><circle cx="191.8" cy="316.9" r="3.6"/><circle cx="193.0" cy="319.2" r="3.6"/><circle cx="187.1" cy="313.9" r="3.6"/><circle cx="134.5" cy="327.7" r="3.6"/><circle cx="150.4" cy="323.0" r="3.6"/><circle cx="157.1" cy="318.1" r="3.6"/><circle cx="193.1" cy="314.9" r="3.6"/><circle cx="171.6" cy="319.4" r="3.6"/><circle cx="153.9" cy="321.0" r="3.6"/><circle cx="184.4" cy="322.3" r="3.6"/><circle cx="190.9" cy="314.6" r="3.6"/><circle cx="188.5" cy="315.0" r="3.6"/><circle cx="190.6" cy="322.6" r="3.6"/><circle cx="161.2" cy="318.1" r="3.6"/><circle cx="193.3" cy="317.6" r="3.6"/><circle cx="174.6" cy="323.8" r="3.6"/><circle cx="191.1" cy="322.8" r="3.6"/><circle cx="180.1" cy="322.6" r="3.6"/><circle cx="153.3" cy="322.8" r="3.6"/><circle cx="167.7" cy="317.5" r="3.6"/><circle cx="174.1" cy="318.9" r="3.6"/><circle cx="135.1" cy="322.2" r="3.6"/><circle cx="164.5" cy="317.7" r="3.6"/><circle cx="191.3" cy="318.2" r="3.6"/><circle cx="159.5" cy="319.9" r="3.6"/><circle cx="179.9" cy="314.1" r="3.6"/><circle cx="138.7" cy="324.0" r="3.6"/><circle cx="159.3" cy="321.9" r="3.6"/><circle cx="136.5" cy="326.0" r="3.6"/><circle cx="143.1" cy="322.5" r="3.6"/><circle cx="159.7" cy="320.1" r="3.6"/><circle cx="150.0" cy="320.2" r="3.6"/><circle cx="183.5" cy="321.3" r="3.6"/><circle cx="191.0" cy="314.2" r="3.6"/><circle cx="189.6" cy="319.7" r="3.6"/><circle cx="130.4" cy="324.4" r="3.6"/><circle cx="189.6" cy="321.9" r="3.6"/><circle cx="127.2" cy="326.7" r="3.6"/><circle cx="177.6" cy="319.8" r="3.6"/><circle cx="165.4" cy="318.5" r="3.6"/><circle cx="196.3" cy="322.1" r="3.6"/><circle cx="174.1" cy="317.8" r="3.6"/><circle cx="186.5" cy="322.9" r="3.6"/><circle cx="146.3" cy="322.8" r="3.6"/><circle cx="191.0" cy="315.6" r="3.6"/><circle cx="196.8" cy="319.8" r="3.6"/><circle cx="156.7" cy="319.3" r="3.6"/><circle cx="189.8" cy="313.5" r="3.6"/><circle cx="237.2" cy="316.8" r="3.6"/><circle cx="278.8" cy="312.9" r="3.6"/><circle cx="214.6" cy="307.0" r="3.6"/><circle cx="240.6" cy="316.0" r="3.6"/><circle cx="261.0" cy="306.2" r="3.6"/><circle cx="268.0" cy="308.1" r="3.6"/><circle cx="211.8" cy="314.2" r="3.6"/><circle cx="263.5" cy="305.9" r="3.6"/><circle cx="225.4" cy="317.2" r="3.6"/><circle cx="240.9" cy="315.5" r="3.6"/><circle cx="251.9" cy="315.5" r="3.6"/><circle cx="283.4" cy="307.3" r="3.6"/><circle cx="212.7" cy="318.4" r="3.6"/><circle cx="224.2" cy="313.2" r="3.6"/><circle cx="224.6" cy="310.9" r="3.6"/><circle cx="229.2" cy="306.3" r="3.6"/><circle cx="217.5" cy="313.5" r="3.6"/><circle cx="252.2" cy="305.8" r="3.6"/><circle cx="198.7" cy="317.7" r="3.6"/><circle cx="263.0" cy="303.3" r="3.6"/><circle cx="230.6" cy="307.0" r="3.6"/><circle cx="274.5" cy="314.9" r="3.6"/><circle cx="237.6" cy="305.2" r="3.6"/><circle cx="232.1" cy="312.6" r="3.6"/><circle cx="252.1" cy="306.7" r="3.6"/><circle cx="257.8" cy="314.2" r="3.6"/><circle cx="222.5" cy="308.2" r="3.6"/><circle cx="226.2" cy="308.8" r="3.6"/><circle cx="276.1" cy="309.6" r="3.6"/><circle cx="289.3" cy="302.2" r="3.6"/><circle cx="281.2" cy="313.8" r="3.6"/><circle cx="250.3" cy="312.8" r="3.6"/><circle cx="224.3" cy="305.9" r="3.6"/><circle cx="251.9" cy="304.7" r="3.6"/><circle cx="243.2" cy="316.1" r="3.6"/><circle cx="204.2" cy="311.8" r="3.6"/><circle cx="272.4" cy="306.0" r="3.6"/><circle cx="221.8" cy="318.2" r="3.6"/><circle cx="246.0" cy="308.3" r="3.6"/><circle cx="249.5" cy="312.7" r="3.6"/><circle cx="275.8" cy="312.0" r="3.6"/><circle cx="288.8" cy="307.6" r="3.6"/><circle cx="279.5" cy="307.3" r="3.6"/><circle cx="285.2" cy="309.6" r="3.6"/><circle cx="198.9" cy="309.0" r="3.6"/><circle cx="307.5" cy="299.0" r="3.6"/><circle cx="300.0" cy="310.0" r="3.6"/><circle cx="292.0" cy="307.0" r="3.6"/><circle cx="312.0" cy="305.0" r="3.6"/><circle cx="314.0" cy="303.0" r="3.6"/><circle cx="317.0" cy="304.0" r="3.6"/><circle cx="332.0" cy="300.0" r="3.6"/><circle cx="337.0" cy="302.5" r="3.6"/><circle cx="352.0" cy="302.0" r="3.6"/><circle cx="365.0" cy="302.5" r="3.6"/><circle cx="376.0" cy="296.0" r="3.6"/><circle cx="386.0" cy="293.0" r="3.6"/><circle cx="570.6" cy="248.4" r="3.6"/><circle cx="534.2" cy="276.6" r="3.6"/><circle cx="550.5" cy="280.5" r="3.6"/><circle cx="591.0" cy="281.4" r="3.6"/><circle cx="512.5" cy="289.0" r="3.6"/><circle cx="458.2" cy="288.9" r="3.6"/><circle cx="474.4" cy="284.0" r="3.6"/><circle cx="476.9" cy="286.5" r="3.6"/></g>
 <g font-size="12" fill="#444">
  <circle cx="55" cy="402.5" r="3" fill="#3366ff"/><text x="75" y="407">土曜日</text>
  <circle cx="137" cy="402.5" r="3" fill="#e5252a"/><text x="157" y="407">日曜日</text>
  <circle cx="219" cy="402.5" r="3" fill="#35c466"/><text x="239" y="407">月曜日</text>
  <circle cx="301" cy="402.5" r="3" fill="#5c4ee0"/><text x="321" y="407">木曜日</text>
  <circle cx="383" cy="402.5" r="3" fill="#4de6e0"/><text x="403" y="407">水曜日</text>
  <circle cx="465" cy="402.5" r="3" fill="#f58b3c"/><text x="485" y="407">火曜日</text>
  <circle cx="55" cy="421.5" r="3" fill="#7b9cf2"/><text x="75" y="426">金曜日</text>
 </g>
</svg>
<svg class="abs" style="left:35px;top:454px" width="10" height="10" viewBox="0 0 10 10"><path d="M1.2 6.3A3.5 3.5 0 0 1 4.4 1.5M7.8 3.7A3.5 3.5 0 0 1 4.6 8.5" fill="none" stroke="#7a7a7a" stroke-width="1.1"/><path d="M4 -0.2L7.2 1.5L4 3.2Z M5 6.8L1.8 8.5L5 10.2Z" fill="#7a7a7a"/></svg>
<div class="t" style="left:47px;top:453px;font-size:11.5px;color:#777">1時間前</div>

<!-- bar card -->
<div class="card" style="left:15px;top:490px;width:629px;height:235px"></div>
<div class="t" style="left:35px;top:502px;font-size:15px;color:#3c3c3c">乗車時間の分布</div>
<svg class="abs" style="left:0;top:0" width="660" height="738">
 <g stroke="#ebebeb" stroke-width="1">
  <line x1="79" y1="557.6" x2="624" y2="557.6"/>
  <line x1="79" y1="589" x2="624" y2="589"/>
 </g>
 <g fill="#3366ff"><rect x="81.30" y="581.11" width="18.2" height="39.19"/><rect x="104.01" y="599.92" width="18.2" height="20.38"/><rect x="126.72" y="606.19" width="18.2" height="14.11"/><rect x="149.42" y="607.76" width="18.2" height="12.54"/><rect x="172.13" y="609.33" width="18.2" height="10.97"/><rect x="194.84" y="610.89" width="18.2" height="9.40"/><rect x="217.55" y="609.33" width="18.2" height="10.97"/><rect x="240.26" y="595.22" width="18.2" height="25.08"/><rect x="262.96" y="595.22" width="18.2" height="25.08"/><rect x="285.67" y="587.38" width="18.2" height="32.92"/><rect x="308.38" y="579.54" width="18.2" height="40.75"/><rect x="331.09" y="576.41" width="18.2" height="43.89"/><rect x="353.80" y="576.41" width="18.2" height="43.89"/><rect x="376.50" y="579.54" width="18.2" height="40.75"/><rect x="399.21" y="579.54" width="18.2" height="40.75"/><rect x="421.92" y="574.84" width="18.2" height="45.46"/><rect x="444.63" y="573.27" width="18.2" height="47.02"/><rect x="467.34" y="590.52" width="18.2" height="29.78"/><rect x="490.04" y="545.06" width="18.2" height="75.24"/><rect x="512.75" y="557.60" width="18.2" height="62.70"/><rect x="535.46" y="554.46" width="18.2" height="65.83"/><rect x="558.17" y="576.41" width="18.2" height="43.89"/><rect x="580.88" y="577.98" width="18.2" height="42.32"/><rect x="603.58" y="585.81" width="18.2" height="34.48"/></g>
 <line x1="79" y1="620.5" x2="624" y2="620.5" stroke="#444" stroke-width="1"/>
 <g font-size="11.5" fill="#444" text-anchor="end">
  <text x="71" y="562">40</text><text x="71" y="593.5">20</text><text x="71" y="625">0</text>
 </g>
 <g font-size="11" fill="#444"><text transform="translate(84.30,636) rotate(90)">00:00</text><text transform="translate(107.01,636) rotate(90)">01:00</text><text transform="translate(129.72,636) rotate(90)">02:00</text><text transform="translate(152.42,636) rotate(90)">03:00</text><text transform="translate(175.13,636) rotate(90)">04:00</text><text transform="translate(197.84,636) rotate(90)">05:00</text><text transform="translate(220.55,636) rotate(90)">06:00</text><text transform="translate(243.26,636) rotate(90)">07:00</text><text transform="translate(265.96,636) rotate(90)">08:00</text><text transform="translate(288.67,636) rotate(90)">09:00</text><text transform="translate(311.38,636) rotate(90)">10:00</text><text transform="translate(334.09,636) rotate(90)">11:00</text><text transform="translate(356.80,636) rotate(90)">12:00</text><text transform="translate(379.50,636) rotate(90)">13:00</text><text transform="translate(402.21,636) rotate(90)">14:00</text><text transform="translate(424.92,636) rotate(90)">15:00</text><text transform="translate(447.63,636) rotate(90)">16:00</text><text transform="translate(470.34,636) rotate(90)">17:00</text><text transform="translate(493.04,636) rotate(90)">18:00</text><text transform="translate(515.75,636) rotate(90)">19:00</text><text transform="translate(538.46,636) rotate(90)">20:00</text><text transform="translate(561.17,636) rotate(90)">21:00</text><text transform="translate(583.88,636) rotate(90)">22:00</text><text transform="translate(606.58,636) rotate(90)">23:00</text></g>
 <text transform="translate(48,581) rotate(-90)" font-size="12.5" fill="#333" text-anchor="middle">乗車回数</text>
 <text x="351" y="683" font-size="12.5" fill="#333" text-anchor="middle">乗車時間</text>
</svg>
<svg class="abs" style="left:35px;top:704px" width="10" height="10" viewBox="0 0 10 10"><path d="M1.2 6.3A3.5 3.5 0 0 1 4.4 1.5M7.8 3.7A3.5 3.5 0 0 1 4.6 8.5" fill="none" stroke="#7a7a7a" stroke-width="1.1"/><path d="M4 -0.2L7.2 1.5L4 3.2Z M5 6.8L1.8 8.5L5 10.2Z" fill="#7a7a7a"/></svg>
<div class="t" style="left:47px;top:703px;font-size:11.5px;color:#777">1時間前</div>

<!-- total card -->
<div class="card" style="left:659px;top:190px;width:307px;height:235px"></div>
<div class="t" style="left:679px;top:202px;font-size:15px;color:#3c3c3c">総走行数</div>
<svg class="abs" style="left:0;top:0" width="1000" height="738"><path d="M783.7 253.8H759L756.8 277.5C760.5 276.3 765 275.7 769.5 275.7C778 275.7 783.8 281.5 783.8 289.5C783.8 298 777.5 304.2 768.5 304.2C763.5 304.2 759 302.5 756 299.5" fill="none" stroke="#1f2830" stroke-width="5"/><path d="M799.5 279.8L792.3 288L792.3 292.8L799.5 292.8Z" fill="#1f2830"/><rect x="818" y="294" width="6.6" height="12.6" fill="#1f2830"/><rect x="846.8" y="294" width="6.6" height="12.6" fill="#1f2830"/></svg>
<div class="t" style="left:734px;top:333px;font-size:39px;font-weight:300;letter-spacing:1px;color:#5b7083">総走行数</div>
<svg class="abs" style="left:679px;top:404px" width="10" height="10" viewBox="0 0 10 10"><path d="M1.2 6.3A3.5 3.5 0 0 1 4.4 1.5M7.8 3.7A3.5 3.5 0 0 1 4.6 8.5" fill="none" stroke="#7a7a7a" stroke-width="1.1"/><path d="M4 -0.2L7.2 1.5L4 3.2Z M5 6.8L1.8 8.5L5 10.2Z" fill="#7a7a7a"/></svg>
<div class="t" style="left:691px;top:403px;font-size:11.5px;color:#777">6時間前</div>

<!-- table card -->
<div class="card" style="left:659px;top:440px;width:307px;height:310px"></div>
<div class="t" style="left:679px;top:452px;font-size:15px;color:#3c3c3c">ルート別運賃の分析</div>
<div class="abs" style="left:679px;top:471px;width:251px;height:36px;background:#f0f3f6;border-bottom:1px solid #e8e8e8"></div>
<div class="t" style="left:689px;top:484px;font-size:13px;color:#333">ルート</div>
<div class="t" style="left:767px;top:484px;font-size:13px;color:#333">ルート頻度</div>
<div class="t" style="left:871px;top:484px;font-size:13px;color:#333">合計運賃</div>
<div id="rows"></div>
<div class="abs" style="left:679px;top:563px;width:251px;height:1px;background:#ececec"></div>
<div class="abs" style="left:679px;top:619px;width:251px;height:1px;background:#ececec"></div>
<div class="abs" style="left:679px;top:675px;width:251px;height:1px;background:#ececec"></div>
<div class="abs" style="left:679px;top:731px;width:251px;height:1px;background:#ececec"></div>
<div class="t" style="left:689px;top:515px;font-size:13px;color:#444;line-height:22px">10001-<br>10001</div>
<div class="t" style="left:689px;top:571px;font-size:13px;color:#444;line-height:22px">10001-<br>10002</div>
<div class="t" style="left:689px;top:627px;font-size:13px;color:#444;line-height:22px">10001-<br>10003</div>
<div class="t" style="left:689px;top:683px;font-size:13px;color:#444;line-height:22px">10001-<br>10005</div>
<div class="t" style="left:830px;top:531px;width:20px;text-align:right;font-size:13px;color:#444">38</div>
<div class="t" style="left:830px;top:587px;width:20px;text-align:right;font-size:13px;color:#444">12</div>
<div class="t" style="left:830px;top:643px;width:20px;text-align:right;font-size:13px;color:#444">29</div>
<div class="t" style="left:830px;top:699px;width:20px;text-align:right;font-size:13px;color:#444">2</div>
<div class="abs" style="left:880px;top:500px;width:50px;height:238px;overflow:hidden">
 <div class="t" style="left:24px;top:31px;font-size:13px;color:#1a9c3a">209.0</div>
 <div class="t" style="left:24px;top:87px;font-size:13px;color:#1a9c3a">147.0</div>
 <div class="t" style="left:24px;top:143px;font-size:13px;color:#1a9c3a">193.0</div>
 <div class="t" style="left:32px;top:199px;font-size:13px;color:#e5262b">34.0</div>
</div>
<!-- inner scrollbar -->
<div class="abs" style="left:930px;top:471px;width:16px;height:267px;background:#f1f1f1"></div>
<div class="abs" style="left:932px;top:488px;width:12px;height:74px;background:#c1c1c1"></div>
<svg class="abs" style="left:933px;top:476px" width="10" height="6"><path d="M1 5L5 1L9 5Z" fill="#a3a3a3"/></svg>

<!-- dropdown menu -->
<div class="abs" style="left:799px;top:72px;width:167px;height:232px;background:#fff;border-radius:4px;box-shadow:0 3px 6px -4px rgba(0,0,0,.12),0 6px 16px 0 rgba(0,0,0,.08),0 9px 28px 8px rgba(0,0,0,.05)"></div>
<div class="t" style="left:811px;top:85px;font-size:13px;color:#333">フルスクリーンを有効化</div>
<div class="t" style="left:811px;top:117px;font-size:13px;color:#333">編集</div>
<div class="t" style="left:811px;top:149px;font-size:13px;color:#333">移動</div>
<div class="t" style="left:811px;top:181px;font-size:13px;color:#333">ゴミ箱に移動</div>
<div class="t" style="left:811px;top:213px;font-size:13px;color:#333">PDFとしてダウンロード</div>
<div class="t" style="left:811px;top:245px;font-size:13px;color:#333">クローンを作成</div>
<div class="t" style="left:811px;top:277px;font-size:13px;color:#333">フォルダに移動</div>

<!-- annotations -->
<div class="abs" style="left:929px;top:33px;width:45px;height:37px;border:3px solid #f00"></div>
<div class="abs" style="left:798px;top:112px;width:169px;height:31px;border:3px solid #f00"></div>
<svg class="abs" style="left:960px;top:70px" width="25" height="60"><path d="M10.8 4.5L12.6 40" stroke="#f00" stroke-width="2.8" stroke-linecap="round"/><path d="M8.3 38L17.2 38L13.4 53Z" fill="#f00"/></svg>

<!-- page scrollbar -->
<div class="abs" style="left:982px;top:1px;width:17px;height:737px;background:#f0f0f0"></div>
<div class="abs" style="left:984px;top:18px;width:13px;height:553px;background:#c1c1c1"></div>
<svg class="abs" style="left:986px;top:7px" width="9" height="6"><path d="M0.5 5H8.5L4.5 1Z" fill="#a3a3a3"/></svg>
<svg class="abs" style="left:986px;top:727px" width="9" height="6"><path d="M0.5 1H8.5L4.5 5Z" fill="#505050"/></svg>
<div class="abs" style="left:999px;top:0;width:1px;height:738px;background:#5a5e63"></div>
</body>
</html>
